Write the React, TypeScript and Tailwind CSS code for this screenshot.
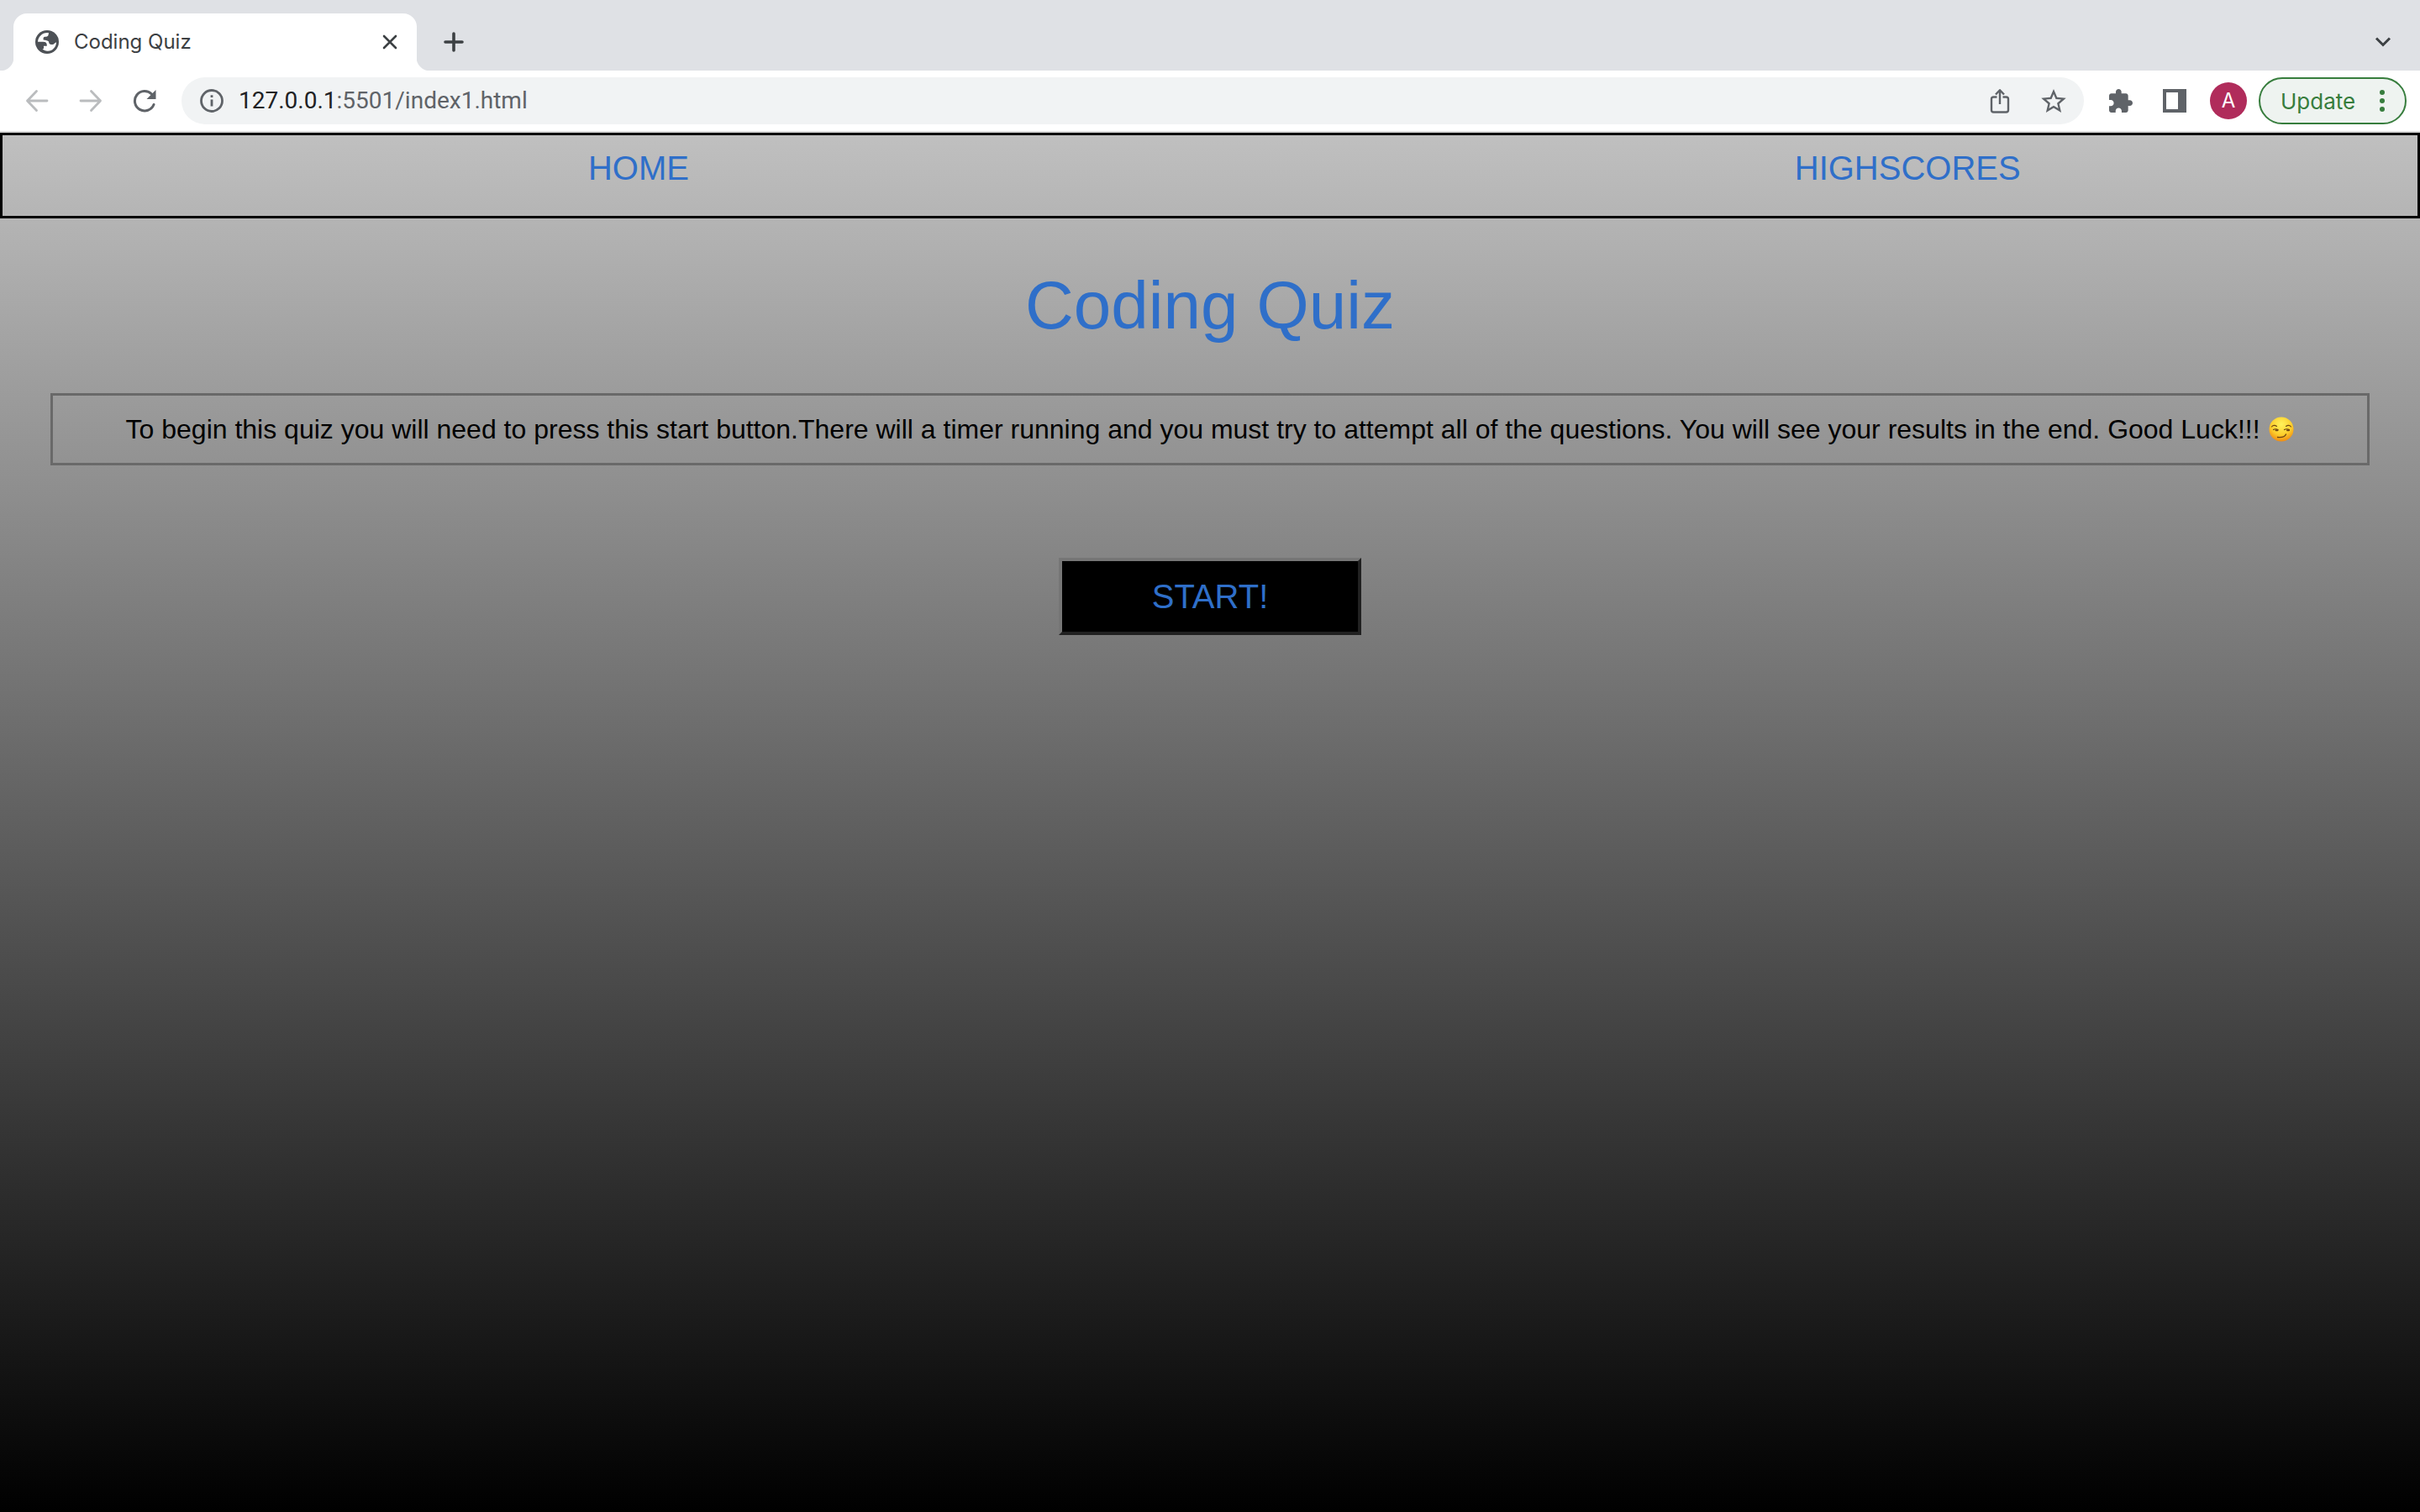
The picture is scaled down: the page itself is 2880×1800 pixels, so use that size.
import React from "react";

const iconButton = "flex size-12 shrink-0 items-center justify-center";

function Globe() {
  return (
    <svg viewBox="0 0 28 28" className="size-7" aria-hidden="true">
      <circle cx="14" cy="14" r="14" fill="#4d5156" />
      <path d="M16 3.200C9 2.200 3.400 7.500 3 13.800H9.500C12.500 13.800 13.800 15.200 13.800 18V18.800H10V22H8.500C10 23.800 12.500 25 15 24.800C20.500 24.500 25 20 25 14.200L23 15.500C21.500 17.500 18 17.500 16.400 15.500L16 13.500C15 12 13 11.800 9.600 11.400V9.300C10 7.800 12 7.800 14 7.600L15.400 6.200Z" fill="#fff" />
    </svg>
  );
}

function TabStrip() {
  return (
    <div className="flex h-[84px] items-end bg-[#dfe1e5] pr-4">
      <div className="h-4 w-4 bg-[radial-gradient(circle_at_0_0,#dfe1e5_16px,#ffffff_17px)]" />
      <div className="flex h-[68px] w-[480px] items-center rounded-t-2xl bg-white pr-5 pl-[26px]">
        <Globe />
        <span className="ml-[18px] grow text-2xl text-[#3c4043]">Coding Quiz</span>
        <button aria-label="Close tab" className="flex size-6 items-center justify-center">
          <svg viewBox="0 0 24 24" className="size-6" stroke="#3c4043" strokeWidth="2.6" strokeLinecap="round">
            <path d="M5 5L19 19M19 5L5 19" />
          </svg>
        </button>
      </div>
      <div className="h-4 w-4 bg-[radial-gradient(circle_at_100%_0,#dfe1e5_16px,#ffffff_17px)]" />
      <button aria-label="New tab" className="ml-1 flex h-[68px] w-12 items-center justify-center">
        <svg viewBox="0 0 24 24" className="size-6" stroke="#3c4043" strokeWidth="3.6" strokeLinecap="round">
          <path d="M12 2V22M2 12H22" />
        </svg>
      </button>
      <button aria-label="Search tabs" className="ml-auto flex h-[68px] w-14 items-center justify-center">
        <svg viewBox="0 0 20 12" className="h-3 w-5" fill="none" stroke="#3c4043" strokeWidth="3">
          <path d="M2 1.5L10 9.5L18 1.5" />
        </svg>
      </button>
    </div>
  );
}

function Toolbar() {
  return (
    <div className="flex h-[74px] items-center border-b-2 border-[#d9d9d9] bg-white pr-4 pl-5">
      <button aria-label="Back" className={iconButton}>
        <svg viewBox="0 0 28 28" className="size-7" fill="none" stroke="#babcbe" strokeWidth="2.8" strokeLinecap="round" strokeLinejoin="round">
          <path d="M26 14H2.500M13.500 2.500L2.500 14L13.500 25.500" />
        </svg>
      </button>
      <button aria-label="Forward" className={`${iconButton} ml-4`}>
        <svg viewBox="0 0 28 28" className="size-7" fill="none" stroke="#babcbe" strokeWidth="2.8" strokeLinecap="round" strokeLinejoin="round">
          <path d="M2 14H25.500M14.500 2.500L25.500 14L14.500 25.500" />
        </svg>
      </button>
      <button aria-label="Reload" className={`${iconButton} ml-4`}>
        <svg viewBox="0 0 28 28" className="size-7" fill="none">
          <path d="M25 18.500A11.700 11.700 0 1 1 22.500 6" stroke="#5f6368" strokeWidth="3" strokeLinecap="round" />
          <path d="M27.500 1V12H16.500Z" fill="#5f6368" />
        </svg>
      </button>
      <div className="ml-5 flex h-14 grow items-center rounded-full bg-[#f1f3f4] pr-3 pl-5">
        <button aria-label="Site information" className="flex size-8 items-center justify-center">
          <svg viewBox="0 0 28 28" className="size-7" fill="none">
            <circle cx="14" cy="14" r="12.5" stroke="#5f6368" strokeWidth="2.8" />
            <path d="M14 12.500V20.500M14 7.300V10" stroke="#5f6368" strokeWidth="2.8" />
          </svg>
        </button>
        <div className="ml-4 grow font-['Roboto',sans-serif] text-[28px] leading-8 text-[#5f6368]">
          <span className="text-[#202124]">127.0.0.1</span>:5501/index1.html
        </div>
        <button aria-label="Share" className={iconButton}>
          <svg viewBox="0 0 24 30" className="h-[30px] w-6" fill="none" stroke="#5f6368" strokeWidth="2.4" strokeLinejoin="round">
            <path d="M8.500 10.500H4.500Q2 10.500 2 13V26Q2 28.500 4.500 28.500H19.500Q22 28.500 22 26V13Q22 10.500 19.500 10.500H15.500" />
            <path d="M12 19V2.500M7 7.500L12 2.200L17 7.500" />
          </svg>
        </button>
        <button aria-label="Bookmark this page" className={`${iconButton} ml-4`}>
          <svg viewBox="2 2 20 19" className="h-7 w-[30px]" fill="#5f6368">
            <path d="M22 9.240l-7.190-.62L12 2 9.190 8.630 2 9.240l5.460 4.730L5.820 21 12 17.270 18.180 21l-1.630-7.030L22 9.240zM12 15.400l-3.760 2.270 1-4.280-3.320-2.880 4.380-.38L12 6.100l1.710 4.040 4.380.38-3.320 2.880 1 4.280L12 15.400z" />
          </svg>
        </button>
      </div>
      <button aria-label="Extensions" className={`${iconButton} ml-5`}>
        <svg viewBox="2 1 21 21" className="size-7" fill="#5f6368">
          <path d="M20.500 11H19V7c0-1.100-.9-2-2-2h-4V3.500C13 2.120 11.880 1 10.500 1S8 2.120 8 3.500V5H4c-1.100 0-1.990.9-1.990 2v3.800H3.500c1.490 0 2.700 1.210 2.700 2.700s-1.210 2.700-2.700 2.700H2V20c0 1.100.9 2 2 2h3.800v-1.500c0-1.490 1.210-2.700 2.700-2.700 1.490 0 2.700 1.210 2.700 2.700V22H17c1.100 0 2-.9 2-2v-4h1.500c1.380 0 2.500-1.120 2.500-2.500S21.880 11 20.500 11z" />
        </svg>
      </button>
      <button aria-label="Side panel" className={`${iconButton} ml-4`}>
        <svg viewBox="0 0 28 28" className="size-7">
          <path fillRule="evenodd" d="M0 0H28V28H0ZM4 4V24H18V4Z" fill="#5f6368" />
        </svg>
      </button>
      <button aria-label="Profile" className="ml-[18px] flex size-11 shrink-0 items-center justify-center rounded-full bg-[#b02c5b] text-2xl text-white">
        A
      </button>
      <button className="ml-[14px] flex h-14 w-44 shrink-0 items-center justify-between rounded-full border-2 border-[#377d3d] bg-[#eef3f0] pr-6 pl-6 text-[26px] text-[#377d3d]">
        Update
        <svg viewBox="0 0 6 28" className="h-7 w-[6px]" fill="#377d3d">
          <circle cx="3" cy="4" r="3" />
          <circle cx="3" cy="14" r="3" />
          <circle cx="3" cy="24" r="3" />
        </svg>
      </button>
    </div>
  );
}

function SmirkFace() {
  return (
    <svg viewBox="0 0 30 30" className="ml-[2px] inline size-[30px] align-[-4px]" role="img" aria-label="Smirking face">
      <defs>
        <radialGradient id="face" cx="0.5" cy="0.3" r="0.7">
          <stop offset="0" stopColor="#fff25c" />
          <stop offset="0.6" stopColor="#fdcf2d" />
          <stop offset="1" stopColor="#f08c12" />
        </radialGradient>
      </defs>
      <circle cx="15" cy="15" r="14.500" fill="url(#face)" />
      <g fill="none" stroke="#6d4312" strokeLinecap="round">
        <path d="M3.500 12Q6 9 9.500 11.500M20.500 11.500Q24 9 26.500 12" strokeWidth="1.1" />
        <path d="M5.500 15.500Q8 14 11 15.500M18.500 15.500Q21.500 14 24.500 15.500" strokeWidth="1.2" />
        <path d="M8.500 16.200H10.500M22 16.200H24" strokeWidth="2" />
        <path d="M10.500 24.500Q18.500 25.500 20.500 21" strokeWidth="1.3" />
      </g>
    </svg>
  );
}

export default function App() {
  return (
    <div className="flex min-h-screen flex-col font-['Inter',sans-serif]">
      <header>
        <TabStrip />
        <Toolbar />
      </header>
      <main className="flex grow flex-col bg-[linear-gradient(#c0c0c0,#000000)] font-['Liberation_Sans',sans-serif] text-black">
        <nav className="flex justify-between border-[3px] border-black pt-4 pr-[16.4%] pb-[34px] pl-[24.2%] text-[40px] leading-[46px] text-[#2f6fc9]">
          <a href="#home">HOME</a>
          <a href="#highscores">HIGHSCORES</a>
        </nav>
        <h1 className="mt-[58px] text-center text-[80px] leading-[92px] text-[#2f6fc9]">Coding Quiz</h1>
        <p className="mx-[60px] mt-[58px] border-[3px] border-[#696969] py-5 text-center text-[32px] leading-10">
          To begin this quiz you will need to press this start button.There will a timer running and you must try to attempt all of the questions. You will see your results in the end. Good Luck!!!{" "}
          <SmirkFace />
        </p>
        <button className="mt-[110px] h-[92px] w-[360px] self-center border-4 border-t-[#767676] border-r-[#212121] border-b-[#212121] border-l-[#767676] bg-black text-[40px] leading-[46px] text-[#2f6fc9]">
          START!
        </button>
      </main>
    </div>
  );
}
